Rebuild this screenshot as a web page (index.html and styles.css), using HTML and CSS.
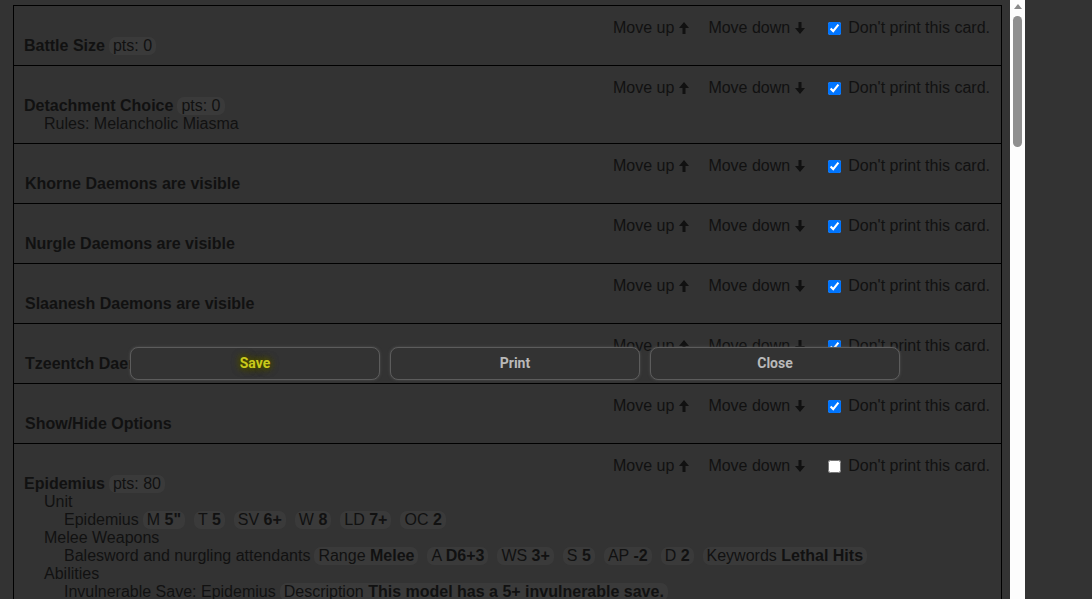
FILE: index.html
```html
<!DOCTYPE html>
<html>
<head>
<meta charset="utf-8">
<link rel="stylesheet" href="styles.css">
</head>
<body>
<div class="screen">
  <div class="viewport">
    <div class="cards">
      <div class="card">
        <div class="controls">
          <span class="ctl">Move up <svg class="arr" viewBox="0 0 10 12"><path d="M5 0 L10 6 H6.5 V12 H3.5 V6 H0 Z"/></svg></span>
          <span class="ctl">Move down <svg class="arr" viewBox="0 0 10 12"><path d="M5 12 L10 6 H6.5 V0 H3.5 V6 H0 Z"/></svg></span>
          <label class="noprint"><input type="checkbox" checked>Don't print this card.</label>
        </div>
        <div class="title"><b>Battle Size</b><span class="pill">pts: 0</span></div>
      </div>
      <div class="card">
        <div class="controls">
          <span class="ctl">Move up <svg class="arr" viewBox="0 0 10 12"><path d="M5 0 L10 6 H6.5 V12 H3.5 V6 H0 Z"/></svg></span>
          <span class="ctl">Move down <svg class="arr" viewBox="0 0 10 12"><path d="M5 12 L10 6 H6.5 V0 H3.5 V6 H0 Z"/></svg></span>
          <label class="noprint"><input type="checkbox" checked>Don't print this card.</label>
        </div>
        <div class="title"><b>Detachment Choice</b><span class="pill">pts: 0</span></div>
        <div class="l1">Rules: Melancholic Miasma</div>
      </div>
      <div class="card">
        <div class="controls">
          <span class="ctl">Move up <svg class="arr" viewBox="0 0 10 12"><path d="M5 0 L10 6 H6.5 V12 H3.5 V6 H0 Z"/></svg></span>
          <span class="ctl">Move down <svg class="arr" viewBox="0 0 10 12"><path d="M5 12 L10 6 H6.5 V0 H3.5 V6 H0 Z"/></svg></span>
          <label class="noprint"><input type="checkbox" checked>Don't print this card.</label>
        </div>
        <div class="title alt"><b>Khorne Daemons are visible</b></div>
      </div>
      <div class="card">
        <div class="controls">
          <span class="ctl">Move up <svg class="arr" viewBox="0 0 10 12"><path d="M5 0 L10 6 H6.5 V12 H3.5 V6 H0 Z"/></svg></span>
          <span class="ctl">Move down <svg class="arr" viewBox="0 0 10 12"><path d="M5 12 L10 6 H6.5 V0 H3.5 V6 H0 Z"/></svg></span>
          <label class="noprint"><input type="checkbox" checked>Don't print this card.</label>
        </div>
        <div class="title alt"><b>Nurgle Daemons are visible</b></div>
      </div>
      <div class="card">
        <div class="controls">
          <span class="ctl">Move up <svg class="arr" viewBox="0 0 10 12"><path d="M5 0 L10 6 H6.5 V12 H3.5 V6 H0 Z"/></svg></span>
          <span class="ctl">Move down <svg class="arr" viewBox="0 0 10 12"><path d="M5 12 L10 6 H6.5 V0 H3.5 V6 H0 Z"/></svg></span>
          <label class="noprint"><input type="checkbox" checked>Don't print this card.</label>
        </div>
        <div class="title alt"><b>Slaanesh Daemons are visible</b></div>
      </div>
      <div class="card">
        <div class="controls">
          <span class="ctl">Move up <svg class="arr" viewBox="0 0 10 12"><path d="M5 0 L10 6 H6.5 V12 H3.5 V6 H0 Z"/></svg></span>
          <span class="ctl">Move down <svg class="arr" viewBox="0 0 10 12"><path d="M5 12 L10 6 H6.5 V0 H3.5 V6 H0 Z"/></svg></span>
          <label class="noprint"><input type="checkbox" checked>Don't print this card.</label>
        </div>
        <div class="title alt"><b>Tzeentch Daemons are visible</b></div>
      </div>
      <div class="card">
        <div class="controls">
          <span class="ctl">Move up <svg class="arr" viewBox="0 0 10 12"><path d="M5 0 L10 6 H6.5 V12 H3.5 V6 H0 Z"/></svg></span>
          <span class="ctl">Move down <svg class="arr" viewBox="0 0 10 12"><path d="M5 12 L10 6 H6.5 V0 H3.5 V6 H0 Z"/></svg></span>
          <label class="noprint"><input type="checkbox" checked>Don't print this card.</label>
        </div>
        <div class="title alt"><b>Show/Hide Options</b></div>
      </div>
      <div class="card">
        <div class="controls">
          <span class="ctl">Move up <svg class="arr" viewBox="0 0 10 12"><path d="M5 0 L10 6 H6.5 V12 H3.5 V6 H0 Z"/></svg></span>
          <span class="ctl">Move down <svg class="arr" viewBox="0 0 10 12"><path d="M5 12 L10 6 H6.5 V0 H3.5 V6 H0 Z"/></svg></span>
          <label class="noprint"><input type="checkbox">Don't print this card.</label>
        </div>
        <div class="title"><b>Epidemius</b><span class="pill">pts: 80</span></div>
        <div class="l1">Unit</div>
        <div class="l2">Epidemius<span class="pill">M <b>5"</b></span><span class="pill">T <b>5</b></span><span class="pill">SV <b>6+</b></span><span class="pill">W <b>8</b></span><span class="pill">LD <b>7+</b></span><span class="pill">OC <b>2</b></span></div>
        <div class="l1">Melee Weapons</div>
        <div class="l2">Balesword and nurgling attendants<span class="pill">Range <b>Melee</b></span><span class="pill">A <b>D6+3</b></span><span class="pill">WS <b>3+</b></span><span class="pill">S <b>5</b></span><span class="pill">AP <b>-2</b></span><span class="pill">D <b>2</b></span><span class="pill">Keywords <b>Lethal Hits</b></span></div>
        <div class="l1">Abilities</div>
        <div class="l2">Invulnerable Save: Epidemius<span class="pill">Description <b>This model has a 5+ invulnerable save.</b></span></div>
      </div>
    </div>
  </div>
  <div class="scrollbar">
    <div class="sb-up"></div>
    <div class="sb-thumb"></div>
  </div>
  <div class="side"></div>
</div>
<div class="actions">
  <button class="btn save"><span>Save</span></button>
  <button class="btn">Print</button>
  <button class="btn">Close</button>
</div>
</body>
</html>
```

FILE: styles.css
```css
html, body {
  margin: 0;
  height: 100%;
  background: #333333;
  overflow: hidden;
}
body {
  font-family: "Liberation Sans", Arial, sans-serif;
  font-size: 16px;
  line-height: 18px;
  color: #111111;
}
.screen {
  display: flex;
  height: 599px;
}
.viewport {
  width: 1010px;
  flex: none;
  overflow: hidden;
  box-sizing: border-box;
  padding: 5px 8px 0 13px;
}
.cards {
  border-top: 1px solid #000;
}
.card {
  border: 1px solid #000;
  border-top: none;
  padding: 13px 11px 10px 10px;
}
.controls {
  display: flex;
  justify-content: flex-end;
  align-items: center;
  height: 18px;
}
.ctl {
  display: inline-flex;
  align-items: center;
  margin-left: 19px;
  white-space: nowrap;
}
.arr {
  width: 10px;
  height: 12px;
  margin-left: 5px;
  fill: #111;
}
.noprint {
  display: inline-flex;
  align-items: center;
  margin-left: 23px;
}
.noprint input {
  width: 13px;
  height: 13px;
  margin: 0 7px 0 0;
}
.title {
  height: 18px;
  white-space: nowrap;
}
.title.alt {
  padding-left: 1px;
}
.l1 {
  padding-left: 20px;
  white-space: nowrap;
}
.l2 {
  padding-left: 40px;
  white-space: nowrap;
}
.pill {
  display: inline-block;
  background: #3a3a3a;
  border-radius: 7px;
  padding: 0 4px;
  margin-left: 4px;
}
.pill + .pill {
  margin-left: 9px;
}
.scrollbar {
  width: 15px;
  flex: none;
  background: #fdfdfd;
  display: flex;
  flex-direction: column;
  align-items: center;
}
.sb-up {
  width: 0;
  height: 0;
  margin-top: 4px;
  border-left: 4px solid transparent;
  border-right: 4px solid transparent;
  border-bottom: 5px solid #8a8a8a;
}
.sb-thumb {
  width: 9px;
  height: 131px;
  margin-top: 7px;
  background: #8f8f8f;
  border-radius: 5px;
}
.side {
  flex: 1;
  background: #333333;
}
.actions {
  position: absolute;
  top: 347px;
  left: 130px;
  display: flex;
  gap: 10px;
}
.btn {
  width: 250px;
  height: 33px;
  box-sizing: border-box;
  background: #333333;
  border: 1px solid #5c5c5c;
  border-radius: 8px;
  box-shadow: 0 0 3px rgba(110, 110, 110, 0.5);
  font-family: Roboto, "Liberation Sans", sans-serif;
  font-weight: bold;
  font-size: 14px;
  line-height: 16px;
  color: #b9b9b9;
  padding: 0 0 2px;
}
.btn.save span {
  color: #c9c91c;
  text-shadow: 0 0 8px #4a4a00, 0 0 8px #4a4a00, 0 0 6px #4a4a00, 0 0 4px #4a4a00;
}
```
